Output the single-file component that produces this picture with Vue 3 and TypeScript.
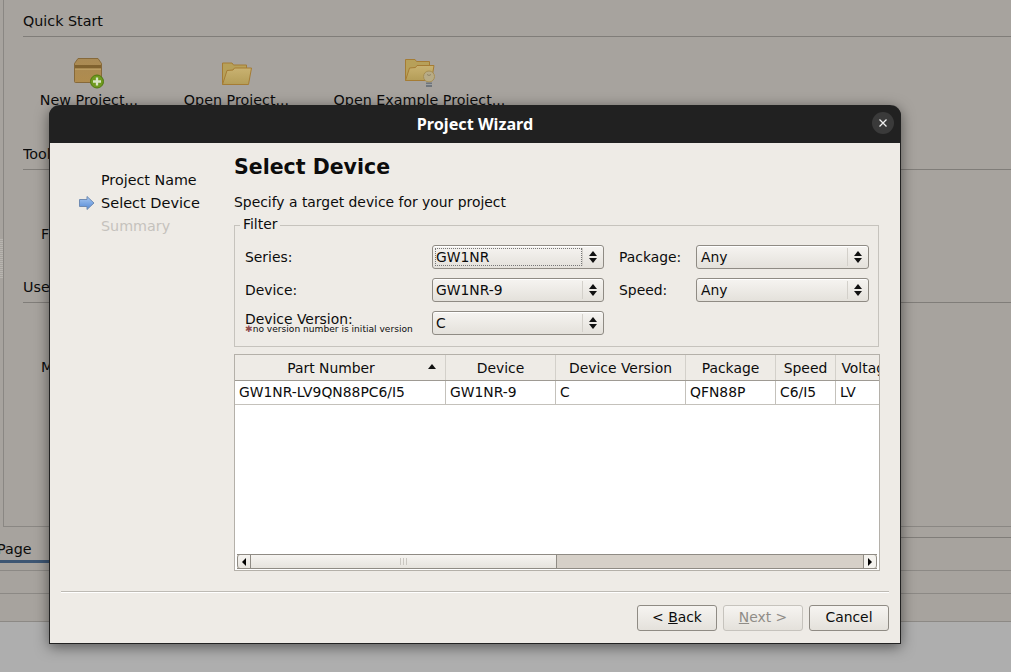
<script setup lang="ts">
const steps = [
  { label: 'Project Name', state: 'done' },
  { label: 'Select Device', state: 'current' },
  { label: 'Summary', state: 'pending' },
]

const columns = [
  { title: 'Part Number', width: 211, sorted: true },
  { title: 'Device', width: 110 },
  { title: 'Device Version', width: 130 },
  { title: 'Package', width: 90 },
  { title: 'Speed', width: 60 },
  { title: 'Voltage', width: 64 },
]

const row = ['GW1NR-LV9QN88PC6/I5', 'GW1NR-9', 'C', 'QFN88P', 'C6/I5', 'LV']
const gridColumns = columns.map((c) => c.width + 'px').join(' ')
</script>

<template>
  <div class="screen">
    <div class="backdrop">
      <div class="panel">
        <i class="grip"></i>
        <section class="group">
          <h3 class="group-title">Quick Start</h3>
          <div class="launchers">
            <div class="launcher launcher-new">
              <svg width="32" height="31" viewBox="-1 0 32 31">
                <defs>
                  <linearGradient id="boxFill" x1="0" y1="0" x2="0" y2="1">
                    <stop offset="0" stop-color="#a98a55" />
                    <stop offset="1" stop-color="#b08c4e" />
                  </linearGradient>
                </defs>
                <path d="M.5 5.500 4 .5h20l3.500 5v18a1 1 0 0 1-1 1h-25a1 1 0 0 1-1-1z" fill="url(#boxFill)" stroke="#86693a" />
                <path d="M1 7h26v3.500H1z" fill="#80622f" />
                <path d="M1 10.500h26v1.500H1z" fill="#bb9d63" />
                <circle cx="23" cy="23.500" r="6.500" fill="#6f9a1f" stroke="#4f7a10" />
                <path d="M23 19.500v8M19 23.500h8" stroke="#d9e5c5" stroke-width="2.300" />
              </svg>
              <span>New Project...</span>
            </div>
            <div class="launcher launcher-open">
              <svg width="31" height="24" viewBox="-1 0 31 24">
                <defs>
                  <linearGradient id="folderFill" x1="0" y1="0" x2="0" y2="1">
                    <stop offset="0" stop-color="#c9b271" />
                    <stop offset="1" stop-color="#b49d58" />
                  </linearGradient>
                </defs>
                <path d="M.5 22.500V1h9.500l1.500 2h13v5" fill="#b7a059" stroke="#a57c34" />
                <path d="M.5 22.500 5 8.500l6-.5 1.500-2h17l-3 16.500z" fill="url(#folderFill)" stroke="#a57c34" />
              </svg>
              <span>Open Project...</span>
            </div>
            <div class="launcher launcher-example">
              <svg width="31" height="29" viewBox="-1 0 31 29">
                <path d="M.5 21.500V.5h9.500l1.500 2h13v6" fill="#b7a059" stroke="#a57c34" />
                <path d="M.5 21.500 4.500 9l6-.5 1.500-2h17l-2.500 15z" fill="url(#folderFill)" stroke="#a57c34" />
                <circle cx="24" cy="17.500" r="5.500" fill="#b7ab86" stroke="#a68e54" />
                <path d="M22 15.500q2 2 4 0" fill="none" stroke="#8f8467" />
                <path d="M21 23.500h6v4.500h-6z" fill="#6f757b" />
                <path d="M21 25.500h6" stroke="#9ba0a4" />
              </svg>
              <span>Open Example Project...</span>
            </div>
          </div>
        </section>
        <section class="group">
          <h3 class="group-title">Tools</h3>
          <div class="group-item">F</div>
        </section>
        <section class="group">
          <h3 class="group-title">User</h3>
          <div class="group-item">M</div>
        </section>
      </div>
      <div class="tab-strip">
        <div class="tab"><span class="tab-label">Page</span></div>
        <div class="tab-rest"></div>
      </div>
      <div class="strip strip-one"></div>
      <div class="strip strip-two"></div>
    </div>

    <div class="dialog">
      <header class="titlebar">
        <span class="title">Project Wizard</span>
        <span class="close">
          <svg width="10" height="10" viewBox="0 0 10 10">
            <path d="M1.500 1.500l7 7M8.500 1.500l-7 7" stroke="#f0f0f0" stroke-width="1.300" />
          </svg>
        </span>
      </header>

      <div class="body">
        <aside class="steps">
          <div v-for="step in steps" :key="step.label" class="step" :class="step.state">
            <svg v-if="step.state === 'current'" class="step-arrow" width="16" height="14" viewBox="0 0 16 14">
              <defs>
                <linearGradient id="arrowFill" x1="0" y1="0" x2="0" y2="1">
                  <stop offset="0" stop-color="#a9c9f2" />
                  <stop offset="1" stop-color="#5489d6" />
                </linearGradient>
              </defs>
              <path d="M.5 3.500h7.500V.5l7 6.500-7 6.500v-3H.5z" fill="url(#arrowFill)" stroke="#6f8bb3" />
            </svg>
            <span>{{ step.label }}</span>
          </div>
        </aside>

        <main class="content">
          <h1 class="page-title">Select Device</h1>
          <p class="page-sub">Specify a target device for your project</p>

          <fieldset class="filter">
            <legend>Filter</legend>
            <div class="filter-grid">
              <label>Series:</label>
              <div class="combo wide focused"><span class="combo-text">GW1NR</span><span class="combo-btn"><i class="up"></i><i class="down"></i></span></div>
              <label class="second">Package:</label>
              <div class="combo narrow"><span class="combo-text">Any</span><span class="combo-btn"><i class="up"></i><i class="down"></i></span></div>

              <label>Device:</label>
              <div class="combo wide"><span class="combo-text">GW1NR-9</span><span class="combo-btn"><i class="up"></i><i class="down"></i></span></div>
              <label class="second">Speed:</label>
              <div class="combo narrow"><span class="combo-text">Any</span><span class="combo-btn"><i class="up"></i><i class="down"></i></span></div>

              <label class="version-label">
                <span>Device Version:</span>
                <small><em>✱</em>no version number is initial version</small>
              </label>
              <div class="combo wide"><span class="combo-text">C</span><span class="combo-btn"><i class="up"></i><i class="down"></i></span></div>
            </div>
          </fieldset>

          <div class="table">
            <div class="table-viewport">
              <div class="thead" :style="{ gridTemplateColumns: gridColumns }">
                <div v-for="col in columns" :key="col.title" class="th" :class="{ sorted: col.sorted }">
                  <span>{{ col.title }}</span>
                  <i v-if="col.sorted" class="sort"></i>
                </div>
              </div>
              <div class="tr" :style="{ gridTemplateColumns: gridColumns }">
                <div v-for="cell in row" :key="cell" class="td">{{ cell }}</div>
              </div>
            </div>
            <div class="hscroll">
              <span class="sb-btn first"><i class="tri-left"></i></span>
              <span class="sb-thumb"><i></i><i></i><i></i></span>
              <span class="sb-trough"></span>
              <span class="sb-btn last"><i class="tri-right"></i></span>
            </div>
          </div>
        </main>
      </div>

      <footer class="footer">
        <button type="button" class="btn">&lt; <u>B</u>ack</button>
        <button type="button" class="btn" disabled><u>N</u>ext &gt;</button>
        <button type="button" class="btn cancel">Cancel</button>
      </footer>
    </div>
  </div>
</template>

<style>
html,
body {
  margin: 0;
  background: #aeaeae;
}
</style>

<style scoped>
.screen {
  position: relative;
  width: 1011px;
  height: 672px;
  overflow: hidden;
  background: #aeaeae;
  font-family: "DejaVu Sans", sans-serif;
  font-size: 13.9px;
  color: #0c0c0c;
}

.backdrop {
  height: 622px;
  background: #a7a39e;
  border-bottom: 1px solid #8c8985;
  box-sizing: border-box;
  font-size: 14.3px;
}

.panel {
  position: relative;
  height: 527px;
  margin-left: 3px;
  padding-left: 19px;
  box-sizing: border-box;
  border-left: 1px solid #8a8783;
  border-bottom: 1px solid #8a8783;
}

.grip {
  position: absolute;
  left: -4px;
  top: 239px;
  width: 3px;
  height: 39px;
  background: repeating-linear-gradient(#b8b5b0 0 1px, #a7a39e 1px 2px);
}

.group {
  height: 133px;
}

.group-title {
  margin: 0;
  height: 36px;
  line-height: 42px;
  font-size: inherit;
  font-weight: 400;
  border-bottom: 1px solid #807d79;
  white-space: nowrap;
  overflow: hidden;
  box-sizing: content-box;
}

.launchers {
  display: flex;
  height: 96px;
  padding-top: 21px;
  box-sizing: border-box;
}

.launcher {
  display: flex;
  flex-direction: column;
  align-items: center;
  white-space: nowrap;
  height: 60px;
}

.launcher span {
  position: absolute;
  top: 92px;
}

.launcher-new {
  margin-left: 50px;
}

.launcher svg {
  display: block;
}

.launcher-open {
  margin-left: 116px;
  padding-top: 4px;
}

.launcher-example {
  margin-left: 152px;
  padding-top: 1px;
}

.group-item {
  margin: 56px 0 0 18px;
}

.tab-strip {
  display: flex;
  height: 36px;
  overflow: hidden;
}

.tab {
  flex: none;
  width: 300px;
  border-bottom: 3px solid #3d5673;
  box-sizing: border-box;
}

.tab-rest {
  flex: 1;
  margin-top: 10px;
  border-top: 1px solid #807d79;
}

.tab-label {
  display: block;
  margin: 14px 0 0 -3px;
}

.strip {
  border-bottom: 1px solid #8c8985;
  box-sizing: border-box;
}

.strip-one {
  height: 8px;
}

.strip-two {
  height: 23px;
}

.dialog {
  position: absolute;
  left: 49px;
  top: 105px;
  width: 852px;
  height: 539px;
  display: flex;
  flex-direction: column;
  box-sizing: border-box;
  border: 1px solid #222;
  border-top: 0;
  border-radius: 11px 11px 0 0;
  background: #eeebe6;
  box-shadow: 0 3px 14px rgba(0, 0, 0, 0.5);
}

.titlebar {
  flex: none;
  position: relative;
  height: 38px;
  margin: 0 -1px;
  box-sizing: border-box;
  display: flex;
  align-items: center;
  justify-content: center;
  background: #212121;
  border-radius: 11px 11px 0 0;
  color: #fff;
}

.title {
  font-family: "Noto Sans", "DejaVu Sans", sans-serif;
  font-size: 16.2px;
  font-weight: 700;
}

.close {
  position: absolute;
  right: 7px;
  top: 7px;
  width: 22px;
  height: 22px;
  border-radius: 50%;
  background: #3a3a3a;
  display: flex;
  align-items: center;
  justify-content: center;
}

.body {
  flex: 1;
  display: flex;
  min-height: 0;
}

.steps {
  flex: none;
  width: 184px;
  padding: 26px 0 0 51px;
  box-sizing: border-box;
  font-size: 14.3px;
}

.step {
  position: relative;
  height: 23px;
  line-height: 23px;
}

.step.current {
  font-size: 14.5px;
}

.step.pending {
  color: #c5c2bd;
}

.step-arrow {
  position: absolute;
  left: -22px;
  top: 4px;
}

.content {
  flex: none;
  width: 646px;
  display: flex;
  flex-direction: column;
}

.page-title {
  margin: 12px 0 0;
  height: 24px;
  line-height: 24px;
  font-size: 20.5px;
  font-weight: 700;
}

.page-sub {
  margin: 13px 0 0;
  height: 20px;
  line-height: 20px;
}

.filter {
  margin: 5px 0 0;
  padding: 0;
  width: 645px;
  height: 130px;
  box-sizing: border-box;
  border: 1px solid #c6c3bd;
  min-inline-size: 0;
}

.filter legend {
  margin-left: 5px;
  padding: 0 3px;
  height: 16px;
  line-height: 14px;
}

.filter-grid {
  display: grid;
  grid-template-columns: 187px 172px 92px 173px;
  grid-auto-rows: 24px;
  row-gap: 9px;
  padding: 12px 0 0 10px;
  align-items: center;
}

.second {
  padding-left: 15px;
}

.version-label {
  display: flex;
  flex-direction: column;
  line-height: 12px;
}

.version-label small {
  font-size: 9.1px;
  line-height: 9px;
  white-space: nowrap;
}

.version-label em {
  font-style: normal;
  color: #8e4a4a;
}

.combo {
  display: flex;
  height: 24px;
  box-sizing: border-box;
  border: 1px solid #8f8b84;
  border-radius: 3px;
  background: linear-gradient(#f6f4f1, #e4e1db);
  box-shadow: inset 0 1px 0 #fff;
}

.combo-text {
  flex: 1;
  margin: 2px 0 2px 2px;
  line-height: 16px;
  border: 1px solid transparent;
}

.narrow .combo-text {
  padding-left: 1px;
}

.focused .combo-text {
  border: 1px dotted #777;
}

.combo-btn {
  flex: none;
  width: 20px;
  margin: 2px 0;
  border-left: 1px solid #d3d0ca;
  display: flex;
  flex-direction: column;
  align-items: center;
  justify-content: center;
  gap: 2px;
}

.combo-btn i {
  display: block;
  width: 0;
  height: 0;
  border-left: 4px solid transparent;
  border-right: 4px solid transparent;
}

.combo-btn .up {
  border-bottom: 5px solid #111;
}

.combo-btn .down {
  border-top: 5px solid #111;
}

.table {
  margin-top: 7px;
  width: 646px;
  height: 217px;
  box-sizing: border-box;
  border: 1px solid #b4b0a9;
  display: flex;
  flex-direction: column;
  background: #fff;
}

.table-viewport {
  flex: 1;
  overflow: hidden;
  min-height: 0;
}

.thead,
.tr {
  display: grid;
  white-space: nowrap;
}

.thead {
  height: 26px;
  background: #eeebe6;
  border-bottom: 1px solid #9e9a93;
  box-sizing: border-box;
}

.th {
  position: relative;
  display: flex;
  align-items: center;
  justify-content: center;
  overflow: hidden;
  border-right: 1px solid #d3d0ca;
  box-sizing: border-box;
}

.th.sorted {
  padding-right: 18px;
}

.sort {
  position: absolute;
  right: 9px;
  top: 9px;
  width: 0;
  height: 0;
  border-left: 4.5px solid transparent;
  border-right: 4.5px solid transparent;
  border-bottom: 5px solid #111;
}

.tr {
  height: 24px;
  border-bottom: 1px solid #c4c1bb;
  box-sizing: border-box;
}

.td {
  padding-left: 4px;
  line-height: 22px;
  border-right: 1px solid #c4c1bb;
  box-sizing: border-box;
}

.hscroll {
  flex: none;
  display: flex;
  height: 13px;
  margin: 0 2px 1px;
  border: 1px solid #8f8b84;
  border-width: 1px 0;
  box-sizing: content-box;
  background: #d6d0c8;
}

.sb-btn {
  flex: none;
  width: 14px;
  background: linear-gradient(#f6f4f1, #e6e3dd);
  display: flex;
  align-items: center;
  justify-content: center;
  border-left: 1px solid #8f8b84;
  border-right: 1px solid #8f8b84;
  box-sizing: border-box;
}

.sb-btn.first {
  border-radius: 3px 0 0 3px;
}

.sb-btn.last {
  background: #f4f2ee;
  border-radius: 0 3px 3px 0;
}

.sb-btn i {
  width: 0;
  height: 0;
  border-top: 4px solid transparent;
  border-bottom: 4px solid transparent;
}

.tri-left {
  border-right: 4px solid #000;
}

.tri-right {
  border-left: 4px solid #000;
}

.sb-thumb {
  flex: none;
  width: 306px;
  background: linear-gradient(#f6f4f1, #e6e3dd);
  display: flex;
  align-items: center;
  justify-content: center;
  gap: 2px;
  border-right: 1px solid #8f8b84;
  box-sizing: border-box;
}

.sb-thumb i {
  width: 1px;
  height: 7px;
  background: #c9c6c0;
}

.sb-trough {
  flex: 1;
}

.footer {
  flex: none;
  height: 52px;
  margin: 0 11px;
  border-top: 1px solid #bdbab4;
  box-shadow: inset 0 1px 0 #fff;
  display: flex;
  justify-content: flex-end;
  gap: 6px;
  padding-top: 13px;
  box-sizing: border-box;
}

.btn {
  width: 80px;
  height: 26px;
  padding: 0 0 2px;
  font: inherit;
  color: inherit;
  border: 1px solid #8f8b84;
  border-radius: 3px;
  background: linear-gradient(#f6f4f1, #e4e1db);
}

.btn:disabled {
  color: #8f8c87;
  border-color: #c6c3bd;
}
</style>
